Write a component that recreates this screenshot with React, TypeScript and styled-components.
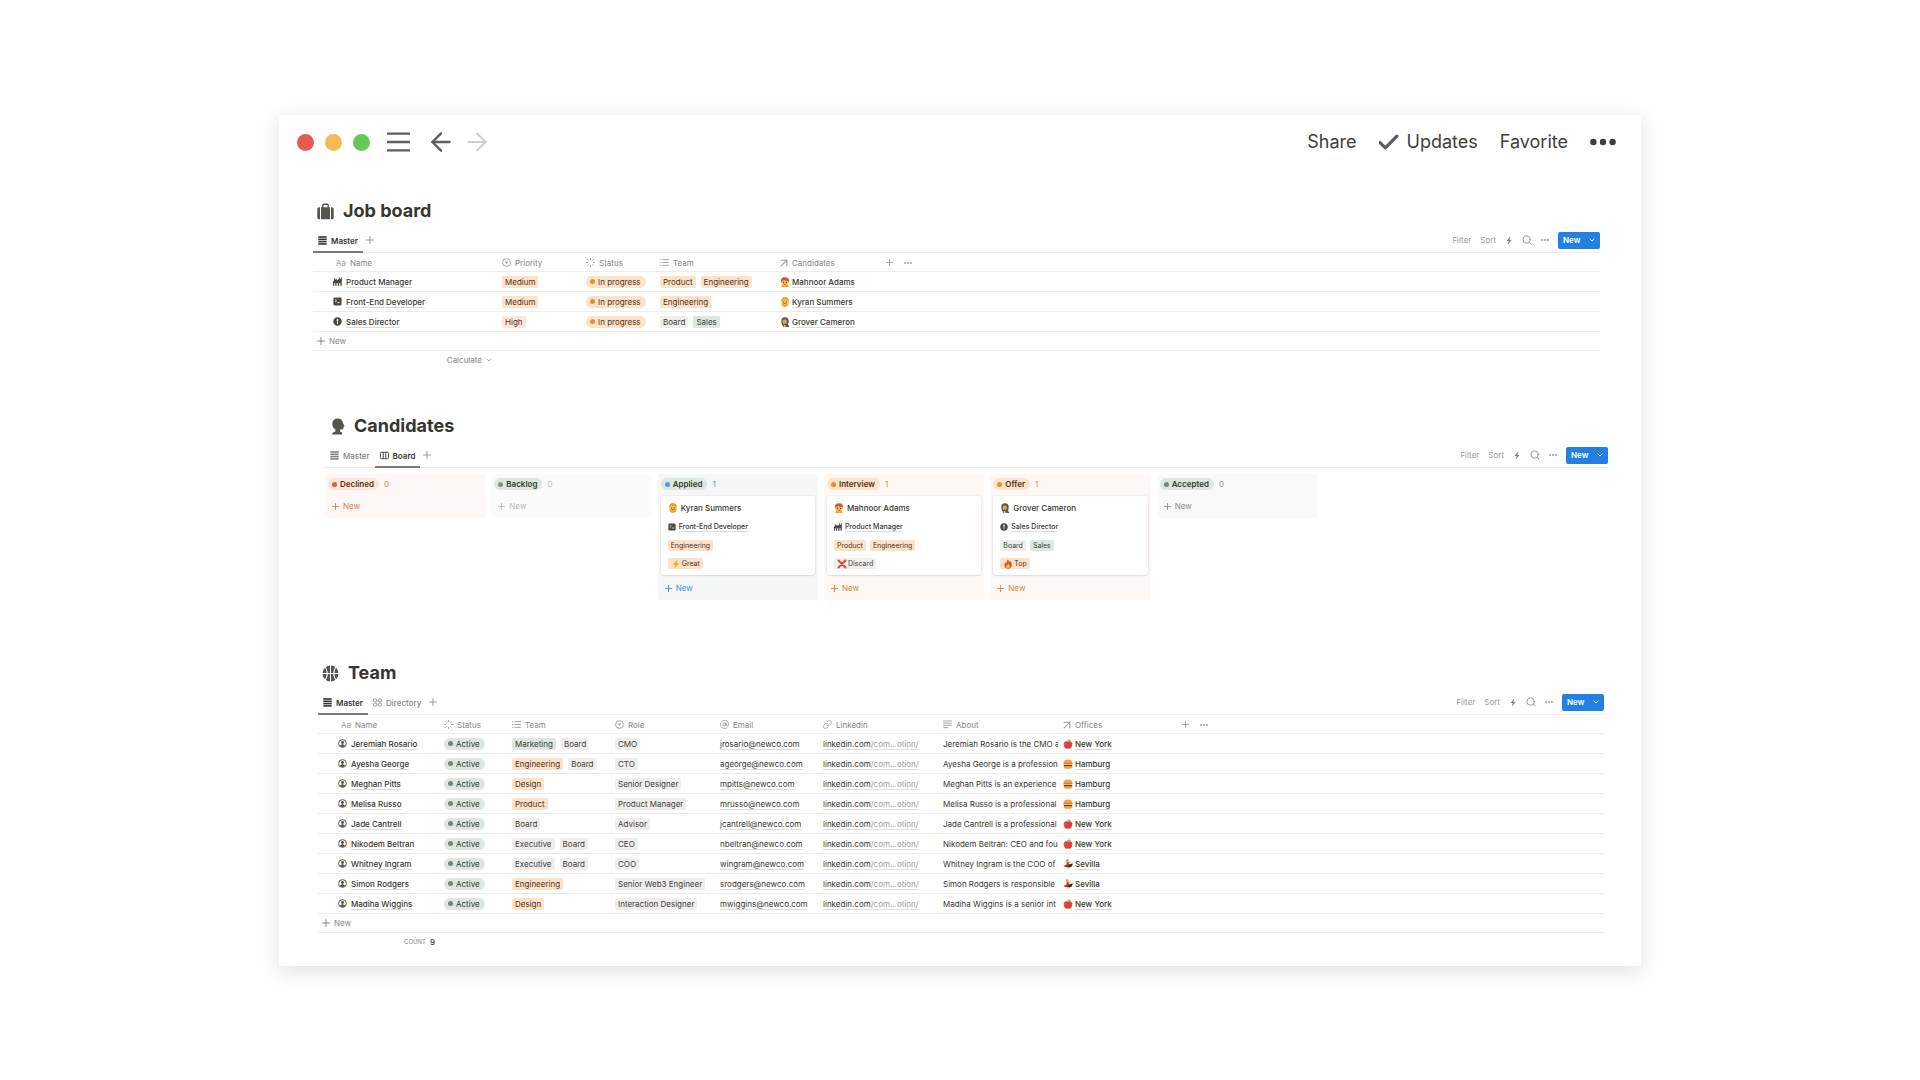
import React from "react";
import styled, { createGlobalStyle, css } from "styled-components";
import {
  ArrowLeft,
  ArrowRight,
  ArrowUpRight,
  AtSign,
  Check,
  ChevronDown,
  Link,
  Plus,
  Search,
} from "lucide-react";

const font = '"Inter", "Liberation Sans", sans-serif';

const ink = "#37352f";
const muted = "#868581";
const faint = "#9c9b97";
const line = "#ececea";

const GlobalStyle = createGlobalStyle`
  *, *::before, *::after { box-sizing: border-box; }
  body {
    margin: 0;
    background: #fefefe;
    color: ${ink};
    font-family: ${font};
    font-size: 8px;
    line-height: 12px;
  }
  button {
    font: inherit;
    color: inherit;
    background: none;
    border: 0;
    padding: 0;
    margin: 0;
    cursor: pointer;
  }
  h2, p { margin: 0; }
  svg { display: block; flex: none; }
`;

const Page = styled.div`
  padding: 115px 24px 100px;
`;

const Window = styled.main`
  max-width: 1362px;
  margin: 0 auto;
  padding-bottom: 15px;
  background: #fff;
  box-shadow: 0 5px 18px rgba(30, 30, 20, 0.13);
`;

/* ---------- title bar ---------- */

const TitleBar = styled.header`
  display: flex;
  align-items: center;
  justify-content: space-between;
  height: 54px;
  padding: 0 25px 0 18px;
`;

const BarGroup = styled.div<{ $gap: number }>`
  display: flex;
  align-items: center;
  gap: ${(p) => p.$gap}px;
`;

const Light = styled.button<{ $color: string }>`
  width: 17px;
  height: 17px;
  border-radius: 50%;
  background: ${(p) => p.$color};
`;

const BarNav = styled.nav`
  display: flex;
  align-items: center;
  gap: 14px;
  margin-left: 6px;
`;

const MenuButton = styled.button`
  display: flex;
  margin-right: 6px;
  color: #5f5e5a;
`;

const NavButton = styled.button<{ $dim?: boolean }>`
  display: flex;
  color: ${(p) => (p.$dim ? "#cfcfcd" : "#5f5e5a")};
`;

const BarAction = styled.button`
  display: flex;
  align-items: center;
  gap: 8px;
  font-size: 18px;
  line-height: 24px;
  color: #3f3e3a;
`;

/* ---------- section ---------- */

const Section = styled.section<{ $left: number; $right: number; $top: number }>`
  padding: ${(p) => p.$top}px ${(p) => p.$right}px 0 ${(p) => p.$left}px;
`;

const Heading = styled.h2<{ $indent: number }>`
  display: flex;
  align-items: center;
  gap: 9px;
  height: 24px;
  margin-bottom: 5px;
  padding-left: ${(p) => p.$indent}px;
  font-size: 18px;
  line-height: 24px;
  font-weight: 700;

  svg { color: #55544f; }
`;

const ViewBar = styled.div`
  display: flex;
  justify-content: space-between;
  height: 25px;
  border-bottom: 1px solid ${line};
`;

const Tabs = styled.div`
  display: flex;
`;

const Tab = styled.button<{ $active?: boolean }>`
  display: flex;
  align-items: center;
  gap: 4px;
  height: 25px;
  padding: 0 5px;
  color: ${(p) => (p.$active ? ink : muted)};
  font-weight: ${(p) => (p.$active ? 600 : 500)};
  box-shadow: ${(p) => (p.$active ? "inset 0 -2px #7b7a76" : "none")};
`;

const AddTab = styled.button`
  display: flex;
  align-items: center;
  margin-left: 3px;
  height: 23px;
  color: ${faint};
`;

const Controls = styled.div`
  display: flex;
  align-items: center;
  gap: 9px;
  color: ${faint};
`;

const Control = styled.button`
  display: flex;
`;

const NewButton = styled.button`
  display: flex;
  align-items: center;
  justify-content: space-between;
  width: 42px;
  height: 17px;
  padding: 0 4px 0 5px;
  border-radius: 2px;
  background: #2380e0;
  color: #fff;
  font-weight: 600;
`;

/* ---------- table ---------- */

const Table = styled.table`
  width: 100%;
  table-layout: fixed;
  border-collapse: separate;
  border-spacing: 0;

  th, td {
    height: 20px;
    padding: 0 0 0 5px;
    border-bottom: 1px solid ${line};
    text-align: left;
    white-space: nowrap;
    overflow: hidden;
    vertical-align: middle;
  }
  th {
    height: 19px;
    padding-top: 1px;
    color: ${muted};
    font-weight: 400;
  }
  th:first-child { padding-left: 23px; }
  td:first-child { padding-left: 20px; }
`;

const HeadLabel = styled.span`
  display: flex;
  align-items: center;
  gap: 4px;

  svg { color: ${faint}; }
`;

const Aa = styled.span`
  color: ${faint};
`;

const HeadTools = styled.span`
  display: flex;
  align-items: center;
  gap: 11px;
  color: ${faint};
`;

const CellRow = styled.span<{ $gap?: number }>`
  display: flex;
  align-items: center;
  gap: ${(p) => p.$gap ?? 4}px;
`;

const underline = css`
  text-decoration: underline;
  text-decoration-color: #dddcd9;
  text-decoration-thickness: 1px;
  text-underline-offset: 2px;
`;

const PageLink = styled.a<{ $small?: boolean }>`
  color: ${ink};
  font-weight: 500;
  font-size: ${(p) => (p.$small ? 7 : 8)}px;
  ${underline}
`;

const PlainLink = styled.a`
  color: ${ink};
  ${underline}

  span { color: ${faint}; }
`;

const tones = {
  orange: "#fbe3c9",
  peach: "#fde6d9",
  green: "#dbe7df",
  grey: "#efeeec",
};
type Tone = keyof typeof tones;

const Tag = styled.span<{ $tone: Tone; $small?: boolean }>`
  display: inline-flex;
  align-items: center;
  gap: 1px;
  height: ${(p) => (p.$small ? 11 : 12)}px;
  padding: 0 3px;
  border-radius: 2px;
  background: ${(p) => tones[p.$tone]};
  color: ${(p) => (p.$tone === "orange" || p.$tone === "peach" ? "#55301c" : "#42413c")};
  font-size: ${(p) => (p.$small ? 7 : 8)}px;
`;

const Pill = styled.span<{ $tone: Tone; $dot: string; $bold?: boolean }>`
  display: inline-flex;
  align-items: center;
  gap: 3px;
  height: 12px;
  padding: 0 5px 0 4px;
  border-radius: 6px;
  background: ${(p) => tones[p.$tone]};
  color: ${(p) => (p.$tone === "green" ? "#33382f" : "#55301c")};
  font-weight: ${(p) => (p.$bold ? 600 : 400)};

  &::before {
    content: "";
    width: 5px;
    height: 5px;
    border-radius: 50%;
    background: ${(p) => p.$dot};
  }
`;

const TableFoot = styled.div`
  height: 19px;
  border-bottom: 1px solid ${line};
`;

const AddRow = styled.button`
  display: flex;
  align-items: center;
  gap: 4px;
  height: 18px;
  padding-left: 4px;
  color: ${muted};
`;

const Summary = styled.div<{ $width: number }>`
  display: flex;
  justify-content: flex-end;
  align-items: center;
  gap: 4px;
  width: ${(p) => p.$width}px;
  height: 18px;
  color: ${muted};

  button { display: flex; align-items: center; gap: 3px; }
  small { font-size: 6px; }
  strong { color: ${ink}; font-weight: 500; }
`;

/* ---------- board ---------- */

const Board = styled.div`
  display: grid;
  grid-template-columns: repeat(6, 1fr);
  align-items: start;
  gap: 6px;
  max-width: 992px;
  margin-top: 6px;
`;

const Column = styled.div<{ $bg: string }>`
  border-radius: 3px;
  background: ${(p) => p.$bg};
`;

const ColumnHead = styled.div<{ $color: string }>`
  display: flex;
  align-items: center;
  gap: 5px;
  height: 20px;
  padding: 0 3px;
  color: ${(p) => p.$color};
`;

const ColumnNew = styled.button<{ $color: string }>`
  display: flex;
  align-items: center;
  gap: 4px;
  height: 24px;
  padding-left: 7px;
  color: ${(p) => p.$color};
`;

const Card = styled.article`
  display: flex;
  flex-direction: column;
  align-items: flex-start;
  gap: 7px;
  margin: 2px 3px 1px;
  padding: 6px 7px;
  border-radius: 3px;
  background: #fff;
  box-shadow: 0 0 0 1px rgba(15, 15, 15, 0.04), 0 1px 2px rgba(15, 15, 15, 0.08);
`;

const CardTitle = styled.p`
  display: flex;
  align-items: center;
  gap: 3px;
  font-weight: 500;
`;

/* ---------- icons ---------- */

const PlusIcon = ({ s = 8 }: { s?: number }) => (
  <Plus size={s} strokeWidth={2} viewBox="4 4 16 16" />
);

const RelationIcon = () => <ArrowUpRight size={8} strokeWidth={1.8} viewBox="5 5 14 14" />;

const Dots = ({ w = 8 }: { w?: number }) => (
  <svg width={w} height={w} viewBox="0 0 26 26" fill="currentColor">
    <circle cx="3.4" cy="13" r="3.2" />
    <circle cx="13" cy="13" r="3.2" />
    <circle cx="22.6" cy="13" r="3.2" />
  </svg>
);

const MenuIcon = () => (
  <svg width="23" height="20" viewBox="0 0 23 20" fill="currentColor">
    <rect y="0.4" width="23" height="2.4" rx="0.6" />
    <rect y="8.8" width="23" height="2.4" rx="0.6" />
    <rect y="17.2" width="23" height="2.4" rx="0.6" />
  </svg>
);

const ListIcon = () => (
  <svg width="9" height="9" viewBox="0 0 9 9" fill="currentColor">
    <rect x="0.3" y="0.2" width="8.4" height="1.6" />
    <rect x="0.3" y="2.5" width="8.4" height="1.6" />
    <rect x="0.3" y="4.8" width="8.4" height="1.6" />
    <rect x="0.3" y="7.1" width="8.4" height="1.6" />
  </svg>
);

const BoardIcon = () => (
  <svg width="9" height="9" viewBox="0 0 10 9" fill="none" stroke="currentColor" strokeWidth="1">
    <rect x="0.5" y="0.9" width="9" height="7.2" rx="1.1" />
    <path d="M3.6 1v7M6.4 1v7" />
  </svg>
);

const GalleryIcon = () => (
  <svg width="9" height="9" viewBox="0 0 10 9" fill="none" stroke="currentColor" strokeWidth="0.9">
    <rect x="0.5" y="0.6" width="3.7" height="3.1" rx="1" />
    <rect x="5.8" y="0.6" width="3.7" height="3.1" rx="1" />
    <rect x="0.5" y="5.3" width="3.7" height="3.1" rx="1" />
    <rect x="5.8" y="5.3" width="3.7" height="3.1" rx="1" />
  </svg>
);

const BoltIcon = () => (
  <svg width="8" height="9" viewBox="-0.5 0 8 9" fill="#7f7e7a">
    <path d="M4.9 0.3 1 5h2.2L2.2 8.7 6.1 3.9H3.9z" />
  </svg>
);

const SelectIcon = () => (
  <svg width="9" height="9" viewBox="0 0 9 9" fill="none" stroke="currentColor" strokeWidth="0.9">
    <circle cx="4.5" cy="4.5" r="3.9" />
    <path d="M2.8 3.6h3.4L4.5 6z" fill="currentColor" stroke="none" />
  </svg>
);

const StatusIcon = () => (
  <svg width="9" height="9" viewBox="0 0 9 9" fill="none" stroke="currentColor" strokeWidth="0.9" strokeLinecap="round">
    <path d="M4.5 0.5v1.2M4.5 7.3v1.2M0.5 4.5h1.2M7.3 4.5h1.2M1.7 1.7l0.7 0.7M6.6 6.6l0.7 0.7M1.7 7.3l0.7-0.7M6.6 2.4l0.7-0.7" />
  </svg>
);

const MultiIcon = () => (
  <svg width="9" height="9" viewBox="0 0 9 9" stroke="currentColor" strokeWidth="0.9">
    <path d="M2.6 1.6h6.2M2.6 4.5h6.2M2.6 7.4h6.2M0.3 1.6h1.1M0.3 4.5h1.1M0.3 7.4h1.1" />
  </svg>
);

const TextIcon = () => (
  <svg width="9" height="9" viewBox="0 0 9 9" stroke="currentColor" strokeWidth="0.9">
    <path d="M0.2 1h8.6M0.2 3.2h8.6M0.2 5.4h8.6M0.2 7.6h5" />
  </svg>
);

const SuitcaseIcon = () => (
  <svg width="17" height="17" viewBox="0 0 17 17" fill="currentColor">
    <path d="M4 16.3V4.2h1.1V2.4Q5.1 0.6 6.9 0.6h3.2q1.8 0 1.8 1.8v1.8H13v12.1zM6.5 4.2h4V2.6q0-.6-.6-.6H7.1q-.6 0-.6.6z" />
    <path d="M3 4.2v12.1H2Q.3 16.3.3 14.4V6.1Q.3 4.2 2 4.2zM14 4.2v12.1h1q1.7 0 1.7-1.9V6.1q0-1.9-1.7-1.9z" />
  </svg>
);

const HeadIcon = () => (
  <svg width="14" height="17" viewBox="0 0 14 17" fill="currentColor">
    <path d="M1 16.5Q1 14.1 4.4 13.4L4.5 11.4Q1.3 9.600 1.300 6 1.300.5 6.800.5q4.700 0 5.300 4.700l1.400 2.600q.2.600-.9.800l-.2 2q-.2 1.100-1.600 1l-1.700-.2v2q2.400.6 2.400 3.100z" />
  </svg>
);

const BallIcon = () => (
  <svg width="17" height="17" viewBox="0 0 17 17">
    <circle cx="8.5" cy="8.5" r="8" fill="currentColor" />
    <g fill="none" stroke="#fff" strokeWidth="1.1">
      <path d="M8.5 0v17M0 8.5h17M3 1.5Q7.4 8.5 3 15.5M14 1.5Q9.6 8.5 14 15.5" />
    </g>
  </svg>
);

const FactoryIcon = ({ s = 9 }: { s?: number }) => (
  <svg width={s} height={s} viewBox="0 0 9 9" fill="#4a4945">
    <path d="M0 8.700V4.400L1 3.200V1.400h1v1.400L3.800 1.600V3.400L5.800 2V.4h1v1.600h1V.4h1v8.300H7.400V6H6.200v2.700H4.700V6H3.500v2.700H2.200V6H1.200v2.700z" />
  </svg>
);

const TerminalIcon = ({ s = 9 }: { s?: number }) => (
  <svg width={s} height={s} viewBox="0 0 9 9">
    <rect x="0.4" y="0.5" width="8.2" height="8" rx="1.4" fill="#4a4945" />
    <path d="M2 2.5l1.500 1.300L2 5.100M4.300 5.600h2.400" fill="none" stroke="#fff" strokeWidth="0.800" />
  </svg>
);

const CoinIcon = ({ s = 9 }: { s?: number }) => (
  <svg width={s} height={s} viewBox="0 0 9 9">
    <circle cx="4.5" cy="4.5" r="4.2" fill="#4a4945" />
    <path d="M4.5 1.900v5.200M3.500 3.100h1.900" stroke="#fff" strokeWidth="0.900" />
  </svg>
);

const PersonIcon = () => (
  <svg width="9" height="9" viewBox="0 0 9 9">
    <circle cx="4.5" cy="4.5" r="3.9" fill="none" stroke="#4a4945" strokeWidth="0.9" />
    <circle cx="4.5" cy="3.5" r="1.4" fill="#4a4945" />
    <path d="M2 6.8Q2.6 5.3 4.5 5.3T7 6.8Q6 7.9 4.5 7.9T2 6.8z" fill="#4a4945" />
  </svg>
);

const Emoji = ({ name, s = 10 }: { name: string; s?: number }) => (
  <svg width={s} height={s} viewBox="-1 0 20 20">
    {name === "redhead" && (
      <g>
        <path d="M1.500 20q0-5.500 7.500-5.500t7.500 5.500z" fill="#ee9f3c" />
        <circle cx="9" cy="10.500" r="7" fill="#fbbf45" />
        <path d="M1 11Q-1 .5 9 .3 19 .5 17 11l-1.800-3Q11 8.300 7.500 5.800L3 8.500z" fill="#d9532f" />
        <circle cx="6" cy="10.800" r="1.100" fill="#6b3a1b" />
        <circle cx="12" cy="10.800" r="1.100" fill="#6b3a1b" />
        <path d="M6 14q3 2 6 0" fill="none" stroke="#a14a1b" strokeWidth="1.300" />
      </g>
    )}
    {name === "blond" && (
      <g>
        <path d="M2 7q0-6.500 7-6.500T16 7v7q-1.500 6-7 6T2 14z" fill="#eaa532" />
        <circle cx="9" cy="10" r="6" fill="#fbc04a" />
        <path d="M2 9Q1.500.5 9 .5T16 9l-2-3Q9 6.500 7 4.500L4 6z" fill="#e0a035" />
        <circle cx="6.300" cy="9.800" r="1.100" fill="#6b3a1b" />
        <circle cx="11.700" cy="9.800" r="1.100" fill="#6b3a1b" />
        <path d="M5.500 13.800q3.500-2.200 7 0" fill="none" stroke="#b06a16" strokeWidth="1.600" />
      </g>
    )}
    {name === "veil" && (
      <g>
        <path d="M1.500 9Q1.500 .3 9 .3q8 0 7.500 9.700L15 14.500l2.500 5.500H6L2.500 14z" fill="#54585c" />
        <ellipse cx="8.500" cy="9.500" rx="4.300" ry="5" fill="#f2a93b" />
        <path d="M7 12.500h3" stroke="#8a4a1b" strokeWidth="1.200" />
        <path d="M6.500 16.500l3-.7 1 4.200H7z" fill="#c9cdd0" />
      </g>
    )}
    {name === "apple" && (
      <g>
        <path d="M9 6q3-2.500 6-.8 3.500 2 2.500 7Q16 19.500 11.800 19.500L9 18.800 6.200 19.500Q2 19.500.5 12.200q-1-5 2.500-7 3-1.700 6 .8z" fill="#dc4038" />
        <path d="M4 8q-1.500 1.500-1 4" fill="none" stroke="#f28b80" strokeWidth="1.600" />
        <path d="M9 6Q8.500 3 9.500 1" fill="none" stroke="#6b3a1b" strokeWidth="1.300" />
        <path d="M10 4Q10.500.5 15 .8 14.500 4.500 10 4z" fill="#5ba33b" />
      </g>
    )}
    {name === "burger" && (
      <g>
        <path d="M0 9Q0 1 9 1T18 9z" fill="#eda33a" />
        <rect x="0" y="8.500" width="18" height="2.200" fill="#e5482f" />
        <path d="M0 10.500h18L14 12.500 11 11l-3 2-4-1.800z" fill="#f7c83b" />
        <rect x="0.500" y="12" width="17" height="3" rx="1" fill="#6b3320" />
        <path d="M0 15h18q0 4.300-4 4.300H4q-4 0-4-4.300z" fill="#e6a63c" />
      </g>
    )}
    {name === "dancer" && (
      <g>
        <circle cx="8" cy="3.300" r="2.800" fill="#e8a13a" />
        <path d="M5 .5l2.500 5.500M10 8l5-3" stroke="#e8a13a" strokeWidth="1.700" />
        <path d="M6.500 6h3.500l1 4.500 7.500-2q0 7-6.500 8L5 16.500-.5 14 6 11z" fill="#b3392c" />
        <path d="M9.500 12.500l8-3q.5 6-6.500 7.500z" fill="#3a2620" />
        <path d="M8 16l1.500 4" stroke="#e8a13a" strokeWidth="1.700" />
      </g>
    )}
    {name === "zap" && <path d="M12.500 1 2.500 11.500h5L5 19 15.500 8.500h-5.200z" fill="#f5a623" />}
    {name === "cross" && (
      <path d="M2 3l14 14M16 3 2 17" stroke="#e04a3f" strokeWidth="4.200" strokeLinecap="round" />
    )}
    {name === "fire" && (
      <g>
        <path d="M9 .5q1 3.500 3.500 5.500.8-1 .8-2.500Q17 7.500 16.500 12.500 15.800 19 9 19.300 2.200 19 1.800 12.500 1.600 9 4 6.500q.3 2 1.500 2.700Q5.500 4 9 .5z" fill="#e8502c" />
        <path d="M9.500 9q3 3.300 3 5.800 0 4-3.500 4.200-3.500-.2-3.600-4Q5.500 13 7 11.500l1 1.500Q9.300 11.500 9.500 9z" fill="#fbc04a" />
      </g>
    )}
  </svg>
);

/* ---------- shared parts ---------- */

const ViewHeader = ({ children }: { children: React.ReactNode }) => (
  <ViewBar>
    <Tabs>
      {children}
      <AddTab aria-label="Add view"><PlusIcon /></AddTab>
    </Tabs>
    <Controls>
      <Control>Filter</Control>
      <Control>Sort</Control>
      <Control aria-label="Automations"><BoltIcon /></Control>
      <Control aria-label="Search"><Search size={10} strokeWidth={2.2} viewBox="1 1 22 22" /></Control>
      <Control aria-label="More"><Dots /></Control>
      <NewButton>New<ChevronDown size={8} strokeWidth={3} /></NewButton>
    </Controls>
  </ViewBar>
);

const Head = ({ icon, children }: { icon: React.ReactNode; children: React.ReactNode }) => (
  <th scope="col"><HeadLabel>{icon}{children}</HeadLabel></th>
);

const ToolsHead = () => (
  <th>
    <HeadTools>
      <Control aria-label="Add property"><PlusIcon s={7} /></Control>
      <Control aria-label="More properties"><Dots /></Control>
    </HeadTools>
  </th>
);

const NewRow = () => (
  <TableFoot>
    <AddRow><PlusIcon />New</AddRow>
  </TableFoot>
);

const toneOf = (label: string): Tone =>
  label === "Board" || label === "Executive"
    ? "grey"
    : label === "Sales" || label === "Marketing"
      ? "green"
      : "orange";

/* ---------- data ---------- */

const jobs = [
  { name: "Product Manager", icon: <FactoryIcon />, priority: "Medium", team: ["Product", "Engineering"], who: "Mahnoor Adams", face: "redhead" },
  { name: "Front-End Developer", icon: <TerminalIcon />, priority: "Medium", team: ["Engineering"], who: "Kyran Summers", face: "blond" },
  { name: "Sales Director", icon: <CoinIcon />, priority: "High", team: ["Board", "Sales"], who: "Grover Cameron", face: "veil" },
];

type CardData = {
  face: string;
  name: string;
  icon: React.ReactNode;
  role: string;
  team: string[];
  mark: string;
  verdict: string;
  tone: Tone;
};

const columns: {
  name: string;
  bg: string;
  tone: Tone;
  dot: string;
  count: string;
  action: string;
  card?: CardData;
}[] = [
  { name: "Declined", bg: "#fdf8f5", tone: "peach", dot: "#e2574c", count: "#d08a5e", action: "#c9824f" },
  { name: "Backlog", bg: "#fbfbfa", tone: "green", dot: "#878c86", count: "#c3c2bf", action: "#bbbab7" },
  {
    name: "Applied", bg: "#f6f8f7", tone: "green", dot: "#4f9be8", count: "#4f97dc", action: "#3f8fdd",
    card: { face: "blond", name: "Kyran Summers", icon: <TerminalIcon s={8} />, role: "Front-End Developer", team: ["Engineering"], mark: "zap", verdict: "Great", tone: "orange" },
  },
  {
    name: "Interview", bg: "#fdf8f3", tone: "orange", dot: "#d9962f", count: "#cf9243", action: "#c98a35",
    card: { face: "redhead", name: "Mahnoor Adams", icon: <FactoryIcon s={8} />, role: "Product Manager", team: ["Product", "Engineering"], mark: "cross", verdict: "Discard", tone: "grey" },
  },
  {
    name: "Offer", bg: "#fdf8f5", tone: "orange", dot: "#d9962f", count: "#cf9243", action: "#c98a35",
    card: { face: "veil", name: "Grover Cameron", icon: <CoinIcon s={8} />, role: "Sales Director", team: ["Board", "Sales"], mark: "fire", verdict: "Top", tone: "orange" },
  },
  { name: "Accepted", bg: "#f8f9f8", tone: "green", dot: "#7d827c", count: "#8d8c88", action: "#8d8c88" },
];

const people: [string, string[], string, string, string, string, string][] = [
  ["Jeremiah Rosario", ["Marketing", "Board"], "CMO", "jrosario", "Jeremiah Rosario is the CMO a", "apple", "New York"],
  ["Ayesha George", ["Engineering", "Board"], "CTO", "ageorge", "Ayesha George is a profession", "burger", "Hamburg"],
  ["Meghan Pitts", ["Design"], "Senior Designer", "mpitts", "Meghan Pitts is an experience", "burger", "Hamburg"],
  ["Melisa Russo", ["Product"], "Product Manager", "mrusso", "Melisa Russo is a professional", "burger", "Hamburg"],
  ["Jade Cantrell", ["Board"], "Advisor", "jcantrell", "Jade Cantrell is a professional", "apple", "New York"],
  ["Nikodem Beltran", ["Executive", "Board"], "CEO", "nbeltran", "Nikodem Beltran: CEO and fou", "apple", "New York"],
  ["Whitney Ingram", ["Executive", "Board"], "COO", "wingram", "Whitney Ingram is the COO of", "dancer", "Sevilla"],
  ["Simon Rodgers", ["Engineering"], "Senior Web3 Engineer", "srodgers", "Simon Rodgers is responsible", "dancer", "Sevilla"],
  ["Madiha Wiggins", ["Design"], "Interaction Designer", "mwiggins", "Madiha Wiggins is a senior int", "apple", "New York"],
];

const Cols = ({ widths }: { widths: number[] }) => (
  <colgroup>
    {widths.map((w, i) => <col key={i} width={w} />)}
    <col />
  </colgroup>
);

export default function App() {
  return (
    <>
      <GlobalStyle />
      <Page>
        <Window>
          <TitleBar>
            <BarGroup $gap={11}>
              <Light $color="#e65a50" aria-label="Close" />
              <Light $color="#f2bb54" aria-label="Minimize" />
              <Light $color="#66c957" aria-label="Zoom" />
              <BarNav>
                <MenuButton aria-label="Menu"><MenuIcon /></MenuButton>
                <NavButton aria-label="Back"><ArrowLeft size={22} strokeWidth={2} viewBox="3 3 18 18" /></NavButton>
                <NavButton $dim aria-label="Forward"><ArrowRight size={22} strokeWidth={1.7} viewBox="3 3 18 18" /></NavButton>
              </BarNav>
            </BarGroup>
            <BarGroup $gap={22}>
              <BarAction>Share</BarAction>
              <BarAction><Check size={20} strokeWidth={3} viewBox="3 2 19 19" color="#5f5e5a" />Updates</BarAction>
              <BarAction>Favorite</BarAction>
              <BarAction aria-label="More"><Dots w={26} /></BarAction>
            </BarGroup>
          </TitleBar>

          <Section $top={30} $left={34} $right={41}>
            <Heading $indent={4}><SuitcaseIcon />Job board</Heading>
            <ViewHeader>
              <Tab $active><ListIcon />Master</Tab>
            </ViewHeader>
            <Table>
              <Cols widths={[184, 84, 74, 120, 106]} />
              <thead>
                <tr>
                  <Head icon={<Aa>Aa</Aa>}>Name</Head>
                  <Head icon={<SelectIcon />}>Priority</Head>
                  <Head icon={<StatusIcon />}>Status</Head>
                  <Head icon={<MultiIcon />}>Team</Head>
                  <Head icon={<RelationIcon />}>Candidates</Head>
                  <ToolsHead />
                </tr>
              </thead>
              <tbody>
                {jobs.map((j) => (
                  <tr key={j.name}>
                    <td><CellRow>{j.icon}<PageLink href="#">{j.name}</PageLink></CellRow></td>
                    <td><CellRow><Tag $tone={j.priority === "High" ? "peach" : "orange"}>{j.priority}</Tag></CellRow></td>
                    <td><CellRow><Pill $tone="orange" $dot="#d9962f">In progress</Pill></CellRow></td>
                    <td><CellRow $gap={5}>{j.team.map((t) => <Tag key={t} $tone={toneOf(t)}>{t}</Tag>)}</CellRow></td>
                    <td><CellRow $gap={2}><Emoji name={j.face} /><PageLink href="#">{j.who}</PageLink></CellRow></td>
                    <td />
                  </tr>
                ))}
              </tbody>
            </Table>
            <NewRow />
            <Summary $width={180}>
              <button>Calculate<ChevronDown size={8} strokeWidth={2} /></button>
            </Summary>
          </Section>

          <Section $top={45} $left={46} $right={33}>
            <Heading $indent={6}><HeadIcon />Candidates</Heading>
            <ViewHeader>
              <Tab><ListIcon />Master</Tab>
              <Tab $active><BoardIcon />Board</Tab>
            </ViewHeader>
            <Board>
              {columns.map((c) => (
                <Column key={c.name} $bg={c.bg}>
                  <ColumnHead $color={c.count}>
                    <Pill $bold $tone={c.tone} $dot={c.dot}>{c.name}</Pill>
                    {c.card ? 1 : 0}
                  </ColumnHead>
                  {c.card && (
                    <Card>
                      <CardTitle><Emoji name={c.card.face} />{c.card.name}</CardTitle>
                      <CellRow $gap={3}>{c.card.icon}<PageLink $small href="#">{c.card.role}</PageLink></CellRow>
                      <CellRow>{c.card.team.map((t) => <Tag $small key={t} $tone={toneOf(t)}>{t}</Tag>)}</CellRow>
                      <Tag $small $tone={c.card.tone}><Emoji name={c.card.mark} />{c.card.verdict}</Tag>
                    </Card>
                  )}
                  <ColumnNew $color={c.action}><PlusIcon s={7} />New</ColumnNew>
                </Column>
              ))}
            </Board>
          </Section>

          <Section $top={61} $left={39} $right={37}>
            <Heading $indent={4}><BallIcon />Team</Heading>
            <ViewHeader>
              <Tab $active><ListIcon />Master</Tab>
              <Tab><GalleryIcon />Directory</Tab>
            </ViewHeader>
            <Table>
              <Cols widths={[121, 68, 103, 105, 103, 120, 120, 119]} />
              <thead>
                <tr>
                  <Head icon={<Aa>Aa</Aa>}>Name</Head>
                  <Head icon={<StatusIcon />}>Status</Head>
                  <Head icon={<MultiIcon />}>Team</Head>
                  <Head icon={<SelectIcon />}>Role</Head>
                  <Head icon={<AtSign size={9} strokeWidth={2} viewBox="1 1 22 22" />}>Email</Head>
                  <Head icon={<Link size={9} strokeWidth={2} viewBox="1 1 22 22" />}>Linkedin</Head>
                  <Head icon={<TextIcon />}>About</Head>
                  <Head icon={<RelationIcon />}>Offices</Head>
                  <ToolsHead />
                </tr>
              </thead>
              <tbody>
                {people.map(([name, team, role, mail, about, mark, office]) => (
                  <tr key={name}>
                    <td><CellRow><PersonIcon /><PageLink href="#">{name}</PageLink></CellRow></td>
                    <td><CellRow><Pill $tone="green" $dot="#7d827c">Active</Pill></CellRow></td>
                    <td><CellRow $gap={5}>{team.map((t) => <Tag key={t} $tone={toneOf(t)}>{t}</Tag>)}</CellRow></td>
                    <td><CellRow><Tag $tone="grey">{role}</Tag></CellRow></td>
                    <td><PlainLink href={`mailto:${mail}@newco.com`}>{mail}@newco.com</PlainLink></td>
                    <td><PlainLink href="#">linkedin.com<span>/com...otion/</span></PlainLink></td>
                    <td>{about}</td>
                    <td><CellRow $gap={2}><Emoji name={mark} /><PageLink href="#">{office}</PageLink></CellRow></td>
                    <td />
                  </tr>
                ))}
              </tbody>
            </Table>
            <NewRow />
            <Summary $width={117}>
              <small>COUNT</small><strong>9</strong>
            </Summary>
          </Section>
        </Window>
      </Page>
    </>
  );
}
